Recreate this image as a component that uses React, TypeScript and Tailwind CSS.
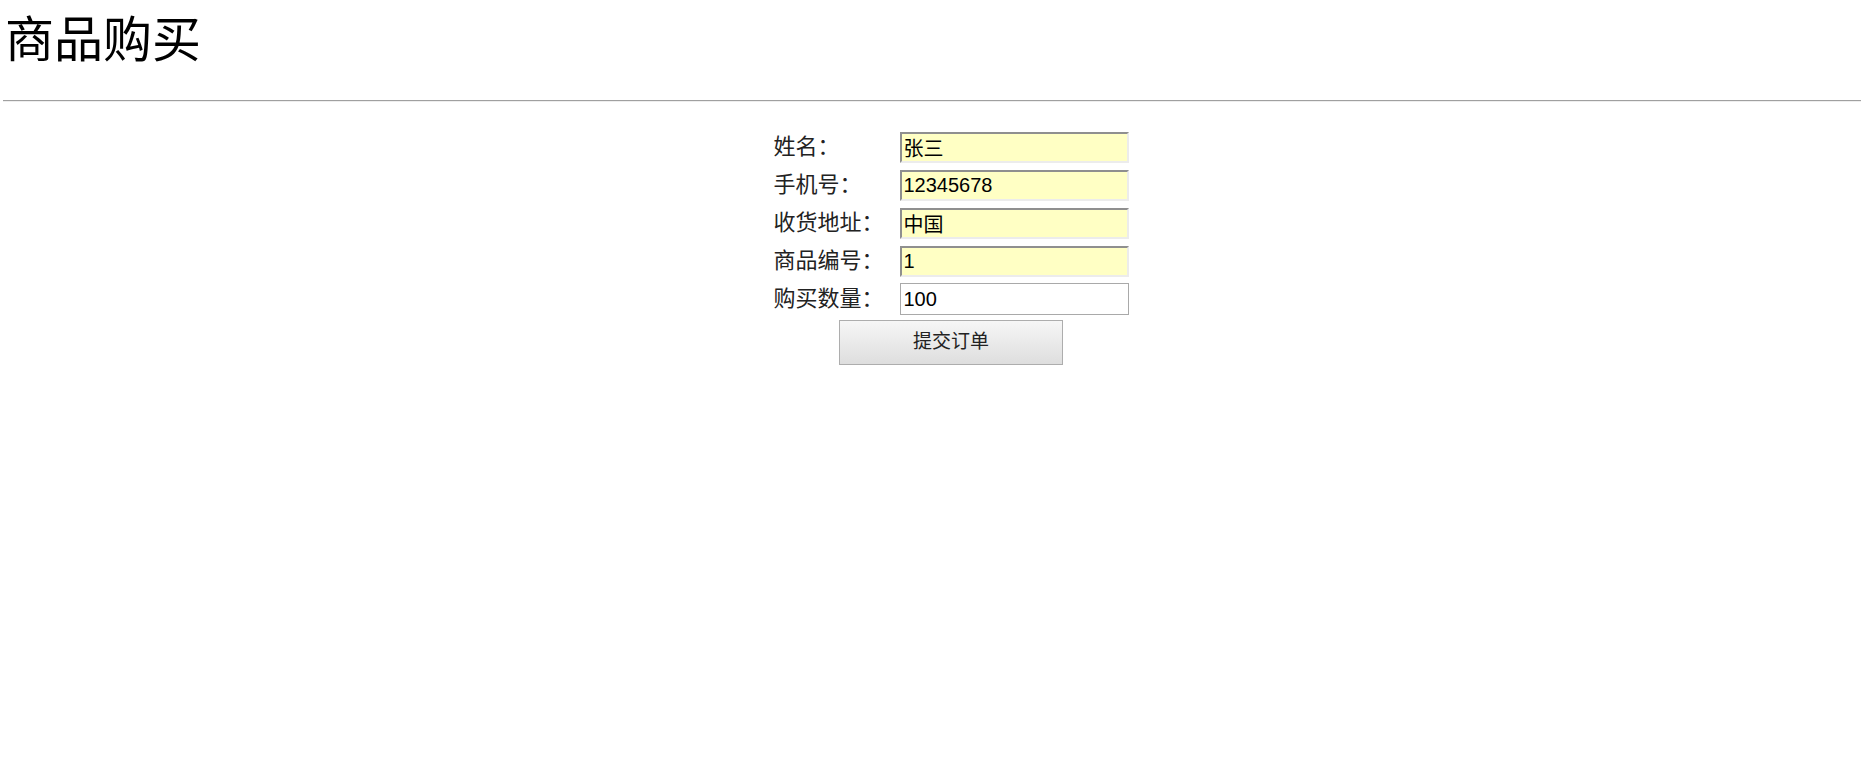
const rows = [
  { label: "姓名：", value: "张三", filled: true },
  { label: "手机号：", value: "12345678", filled: true },
  { label: "收货地址：", value: "中国", filled: true },
  { label: "商品编号：", value: "1", filled: true },
  { label: "购买数量：", value: "100", filled: false },
];

export default function App() {
  return (
    <div className="min-h-[780px] bg-white text-black font-['Liberation_Sans','Noto_Sans_CJK_SC',sans-serif]">
      <h1 className="pl-[5px] pt-[12px] h-[100px] text-[49px] leading-[58px] font-normal font-['Liberation_Serif','Noto_Sans_CJK_SC',serif]">
        商品购买
      </h1>
      <hr className="ml-[3px] h-0 border-0 border-t border-t-[#a0a0a0] border-b border-b-[#eeeeee]" />

      <div className="flex justify-center pl-[41px] pt-[29px]">
        <div className="flex flex-col">
          <div className="flex flex-col gap-[6px]">
            {rows.map((r) => (
              <div key={r.label} className="flex items-center h-[32px]">
                <span className="w-[126px] text-[22px] leading-[32px] text-[#222]">{r.label}</span>
                <input
                  defaultValue={r.value}
                  className={
                    r.filled
                      ? "w-[229px] h-[31px] px-[2px] text-[20px] text-black outline-none bg-[#ffffc4] border-2 border-t-[#8f8f8f] border-l-[#8f8f8f] border-b-[#ececec] border-r-[#ececec]"
                      : "w-[229px] h-[32px] px-[3px] text-[20px] text-black outline-none bg-white border border-[#a9a9a9]"
                  }
                />
              </div>
            ))}
          </div>
          <div className="flex justify-center pt-[5px]">
            <button className="w-[224px] h-[45px] text-[19px] text-[#222] border border-[#adadad] bg-gradient-to-b from-[#f6f6f6] to-[#dedede] font-['Liberation_Serif','Noto_Sans_CJK_SC',serif]">
              提交订单
            </button>
          </div>
        </div>
      </div>
    </div>
  );
}
